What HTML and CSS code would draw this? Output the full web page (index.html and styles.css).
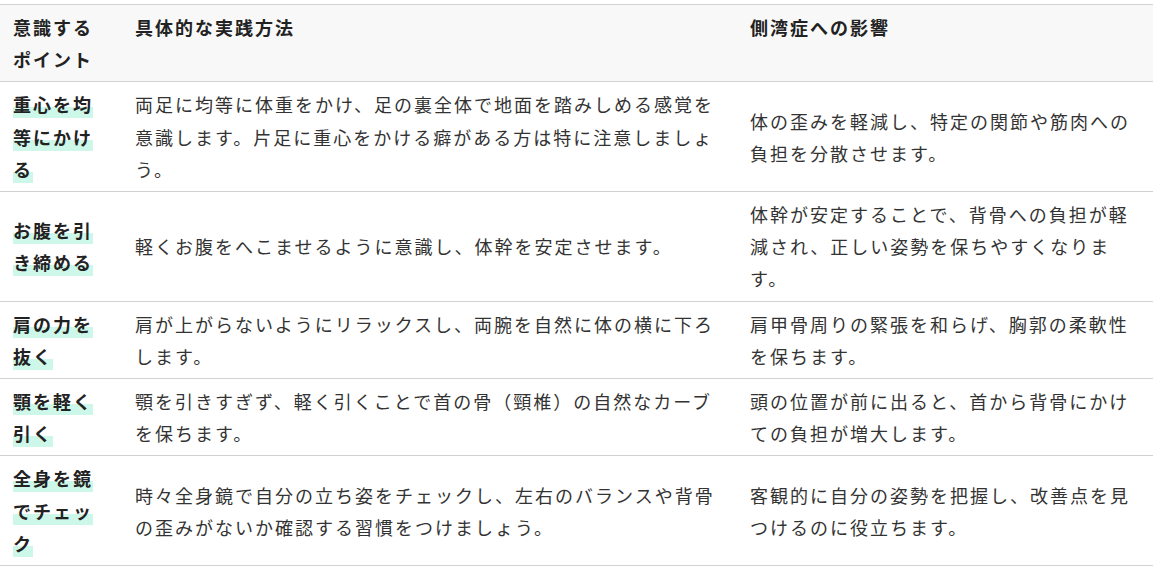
FILE: index.html
```html
<!DOCTYPE html>
<html lang="ja">
<head>
<meta charset="utf-8">
<link rel="stylesheet" href="styles.css">
</head>
<body>
<table class="tbl">
  <colgroup>
    <col class="c1"><col class="c2"><col class="c3">
  </colgroup>
  <thead>
    <tr>
      <th>意識するポイント</th>
      <th>具体的な実践方法</th>
      <th>側湾症への影響</th>
    </tr>
  </thead>
  <tbody>
    <tr>
      <td><strong class="mark">重心を均等にかける</strong></td>
      <td>両足に均等に体重をかけ、足の裏全体で地面を踏みしめる感覚を意識します。片足に重心をかける癖がある方は特に注意しましょう。</td>
      <td>体の歪みを軽減し、特定の関節や筋肉への負担を分散させます。</td>
    </tr>
    <tr>
      <td><strong class="mark">お腹を引き締める</strong></td>
      <td>軽くお腹をへこませるように意識し、体幹を安定させます。</td>
      <td>体幹が安定することで、背骨への負担が軽減され、正しい姿勢を保ちやすくなります。</td>
    </tr>
    <tr>
      <td><strong class="mark">肩の力を抜く</strong></td>
      <td>肩が上がらないようにリラックスし、両腕を自然に体の横に下ろします。</td>
      <td>肩甲骨周りの緊張を和らげ、胸郭の柔軟性を保ちます。</td>
    </tr>
    <tr>
      <td><strong class="mark">顎を軽く引く</strong></td>
      <td>顎を引きすぎず、軽く引くことで首の骨（頸椎）の自然なカーブを保ちます。</td>
      <td>頭の位置が前に出ると、首から背骨にかけての負担が増大します。</td>
    </tr>
    <tr>
      <td><strong class="mark">全身を鏡でチェック</strong></td>
      <td>時々全身鏡で自分の立ち姿をチェックし、左右のバランスや背骨の歪みがないか確認する習慣をつけましょう。</td>
      <td>客観的に自分の姿勢を把握し、改善点を見つけるのに役立ちます。</td>
    </tr>
  </tbody>
</table>
</body>
</html>
```
FILE: styles.css
```css
html, body {
  margin: 0;
  padding: 0;
  background: #fff;
}
body {
  padding-top: 4px;
  font-family: "Noto Sans CJK JP", "Noto Sans", sans-serif;
  font-size: 18px;
  color: #333;
}
.tbl {
  width: 1153px;
  border-collapse: collapse;
  table-layout: fixed;
  border-top: 1px solid #d2d2d2;
}
.c1 { width: 122px; }
.c2 { width: 615px; }
.c3 { width: 416px; }
.tbl th, .tbl td {
  padding: 6px 13px;
  line-height: 32.2px;
  letter-spacing: 2px;
  text-align: left;
  border-bottom: 1px solid #d2d2d2;
}
.tbl th {
  background: #f8f8f8;
  font-weight: bold;
  color: #222;
  vertical-align: top;
}
.tbl td {
  vertical-align: middle;
}
.mark {
  font-weight: bold;
  color: #222;
  background: linear-gradient(transparent 60%, #cdf7e8 60%);
  padding-bottom: 1px;
}
```
